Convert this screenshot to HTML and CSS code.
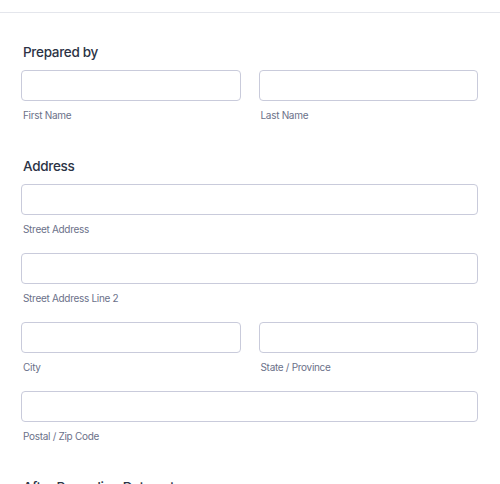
FILE: index.html
```html
<!DOCTYPE html>
<html lang="en">
<head>
<meta charset="utf-8">
<link rel="stylesheet" href="styles.css">
</head>
<body>
<div class="topbar"></div>
<form class="form">
  <section class="section">
    <h2 class="heading">Prepared by</h2>
    <div class="row two">
      <div class="field"><div class="input"></div><div class="sublabel">First Name</div></div>
      <div class="field"><div class="input"></div><div class="sublabel">Last Name</div></div>
    </div>
  </section>
  <section class="section">
    <h2 class="heading">Address</h2>
    <div class="row"><div class="field"><div class="input"></div><div class="sublabel">Street Address</div></div></div>
    <div class="row"><div class="field"><div class="input"></div><div class="sublabel">Street Address Line 2</div></div></div>
    <div class="row two">
      <div class="field"><div class="input"></div><div class="sublabel">City</div></div>
      <div class="field"><div class="input"></div><div class="sublabel">State / Province</div></div>
    </div>
    <div class="row"><div class="field"><div class="input"></div><div class="sublabel">Postal / Zip Code</div></div></div>
  </section>
  <section class="section">
    <h2 class="heading">After Recording Data entry</h2>
  </section>
</form>
</body>
</html>
```
FILE: styles.css
```css
* { box-sizing: border-box; }
html, body { margin: 0; padding: 0; background: #fff; }
body { font-family: Inter, "Noto Sans", sans-serif; width: 500px; height: 484px; overflow: hidden; }
.topbar { height: 13px; border-bottom: 1px solid #e4e6ec; }
.form { padding: 30px 22px 0 21px; display: flex; flex-direction: column; gap: 35px; }
.section { display: flex; flex-direction: column; }
.heading { margin: 0 0 9px 2px; font-size: 13.5px; line-height: 18px; font-weight: 500; letter-spacing: -0.3px; color: #2c3345; }
.row { display: flex; gap: 18px; margin-bottom: 17px; }
.section .row:last-child { margin-bottom: 0; }
.row.two .field { flex: 1 1 0; }
.field { flex: 1 1 auto; display: flex; flex-direction: column; }
.input { height: 31px; border: 1px solid #c9cbdb; border-radius: 4px; background: #fff; }
.sublabel { margin: 7px 0 0 2px; font-size: 10px; line-height: 14px; letter-spacing: -0.3px; color: #6b7189; }
```
